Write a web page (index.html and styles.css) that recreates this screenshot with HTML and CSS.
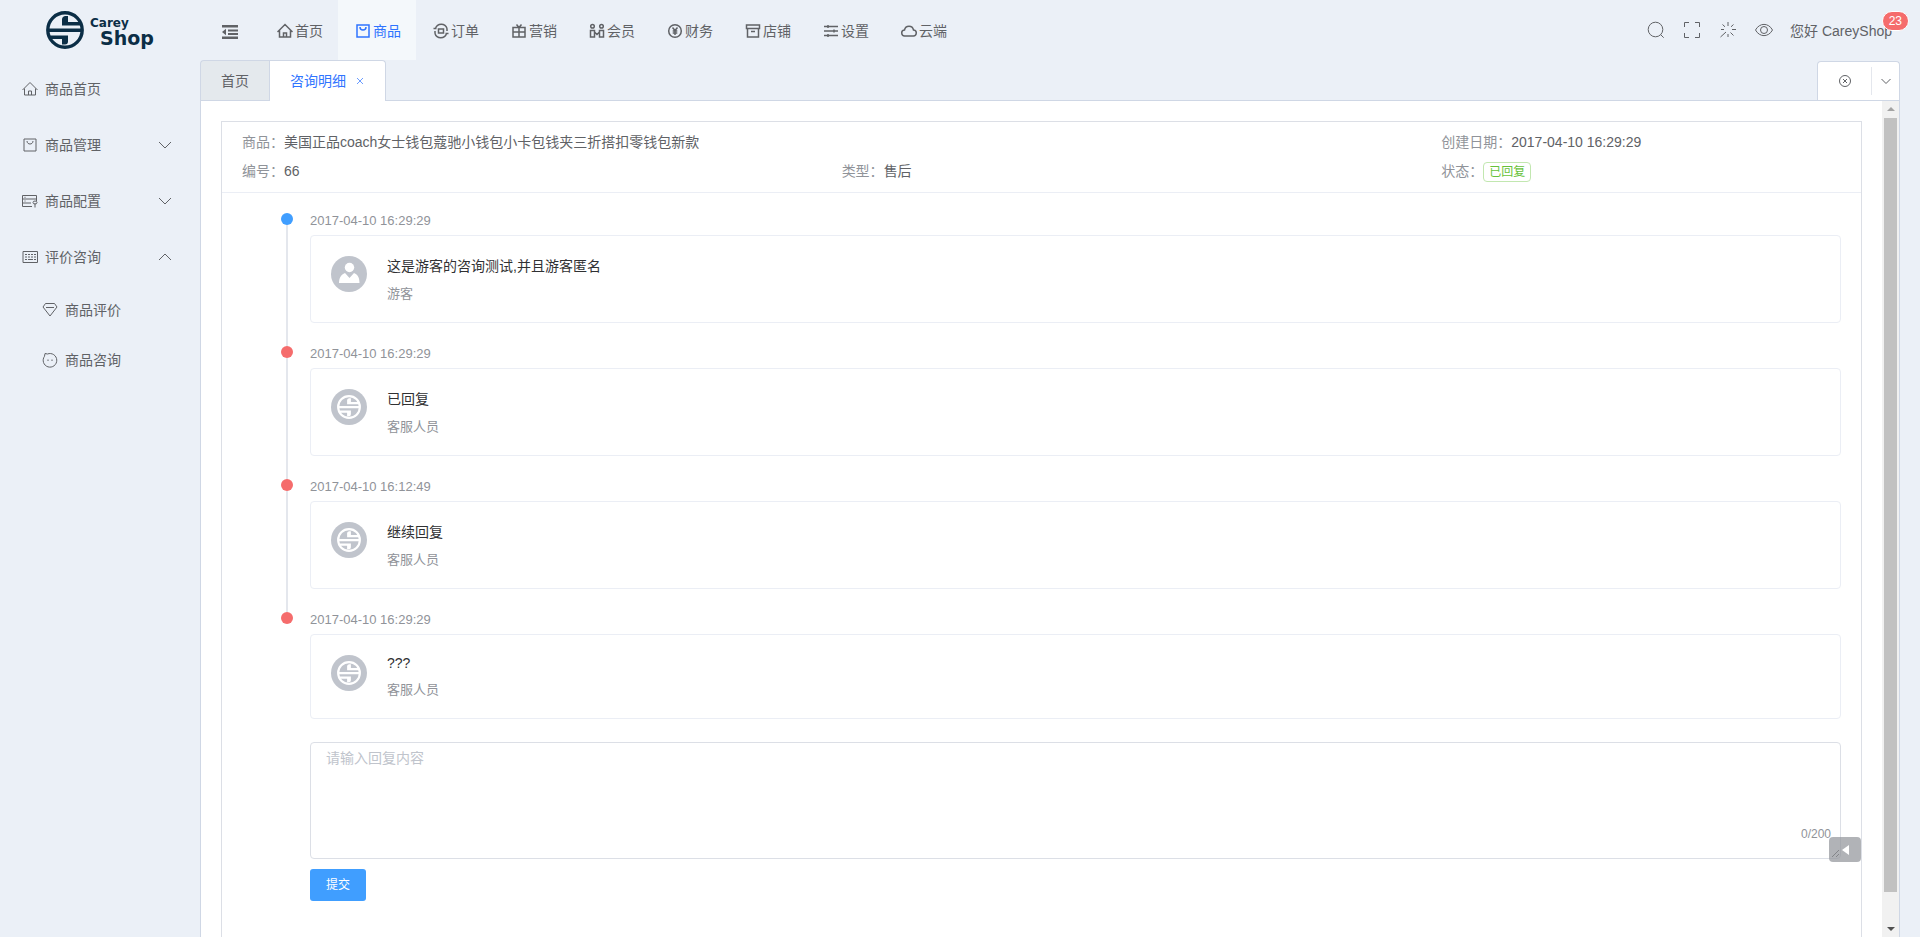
FILE: index.html
```html
<!DOCTYPE html>
<html lang="zh-CN">
<head>
  <meta charset="UTF-8" />
  <meta name="viewport" content="width=device-width, initial-scale=1.0"/>
  <title>咨询明细 - CareyShop</title>
  <link rel="stylesheet" href="styles.css">
</head>
<body>

<svg class="sprite" aria-hidden="true">
  <symbol id="logo" viewBox="0 0 38 38">
    <circle cx="19" cy="19" r="17.2" fill="none" stroke="currentColor" stroke-width="3.4"/>
    <path fill="currentColor" d="M3 17.500h32v3.500H3zM22 5v6h13v3.500H16V8.500q0-3 3-3.500zM3 24.500h19v6q0 3-3 3H16v-5.500H3z"/>
  </symbol>
  <symbol id="home" viewBox="0 0 16 16">
    <path d="M.500 9 8 1.500 15.500 9M2.500 7.500V14h11V7.500M6.500 14v-4h3v4"/>
  </symbol>
  <symbol id="bag" viewBox="0 0 16 16">
    <path d="M2 2h12v12H2zM5 4c0 4 6 4 6 0"/>
  </symbol>
  <symbol id="down" viewBox="0 0 14 14"><path d="m1 4 6 6 6-6"/></symbol>
  <symbol id="close" viewBox="0 0 14 14"><path d="m4 4 6 6M10 4l-6 6"/></symbol>
</svg>

<header class="header">
  <a class="brand" href="#" aria-label="CareyShop">
    <svg class="brand-logo"><use href="#logo"/></svg>
    <span class="brand-text">
      <span class="brand-carey">Carey</span>
      <span class="brand-shop">Shop</span>
    </span>
  </a>

  <button class="toggle" type="button" aria-label="折叠菜单">
    <svg viewBox="0 0 18 16"><path fill="currentColor" d="M1 1h16v2.500H1zM7 5.500h10v2H7zM7 9h10v2H7zM1 12.500h16V15H1zM1 8l4-3.200v6.400z"/></svg>
  </button>

  <nav class="nav">
    <a href="#"><svg class="icon bold"><use href="#home"/></svg>首页</a>
    <a href="#" class="active"><svg class="icon bold"><use href="#bag"/></svg>商品</a>
    <a href="#"><svg class="icon bold" viewBox="0 0 16 16"><path d="M2.500 5.500a6 6 0 0 1 11.500 0M13.500 10.500a6 6 0 0 1-11.500 0M.500 5.500h3M12.500 10.500h3M14 5.500V8M2 10.500V8M5.500 6h5v4h-5z"/></svg>订单</a>
    <a href="#"><svg class="icon bold" viewBox="0 0 16 16"><path d="M2 4.500h12V14H2zM8 4.500V14M2 9h12M5.500 1.500 8 4.500l2.500-3"/></svg>营销</a>
    <a href="#"><svg class="icon bold" viewBox="0 0 16 16"><circle cx="3.500" cy="3.300" r="1.800"/><circle cx="12.500" cy="3.300" r="1.800"/><path d="M1.500 14V7.500h4V14zM10.500 14V7.500h4V14zM5.500 9 8 11.500 10.500 9"/></svg>会员</a>
    <a href="#"><svg class="icon bold" viewBox="0 0 16 16"><circle cx="8" cy="8" r="6.300"/><path d="m5.500 4.500 2.500 3 2.500-3M8 7.500V12M5.700 8h4.600M5.700 10h4.600"/></svg>财务</a>
    <a href="#"><svg class="icon bold" viewBox="0 0 16 16"><path d="M1.500 2h13v3.500h-13zM2.500 5.500V14h11V5.500M6 8.500h4"/></svg>店铺</a>
    <a href="#"><svg class="icon bold" viewBox="0 0 16 16"><path d="M1 3.500h14M1 8h14M1 12.500h14M5 2v3M11 6.500v3M5 11v3"/></svg>设置</a>
    <a href="#"><svg class="icon bold" viewBox="0 0 16 16"><path d="M4 13a3 3 0 0 1-.5-6 4.600 4.600 0 0 1 9 0A3 3 0 0 1 12 13z"/></svg>云端</a>
  </nav>

  <div class="tools">
    <button type="button" aria-label="搜索"><svg viewBox="0 0 18 18"><circle cx="8.500" cy="8.500" r="7.300"/><path d="m13.700 13.700 3 3"/></svg></button>
    <button type="button" aria-label="全屏"><svg viewBox="0 0 18 18"><path d="M1.500 6V1.500H6M12 1.500h4.500V6M16.500 12v4.500H12M6 16.500H1.500V12"/></svg></button>
    <button type="button" aria-label="清除缓存"><svg viewBox="0 0 18 18"><path d="M9 1v4M9 13v3M13 8.500h4M2 8.500h3M3.500 3.500l2.500 2.300M14.500 3.500 12 5.800M14.500 14.500 11.500 11.500M1.500 16l5.500-5"/></svg></button>
    <button type="button" aria-label="主题"><svg viewBox="0 0 18 18"><path d="M.5 9C4.500 1.500 13.500 1.500 17.500 9 13.500 16.500 4.500 16.500.5 9z"/><circle cx="9" cy="9" r="3.500"/></svg></button>
    <a class="user" href="#">您好 CareyShop<span class="badge">23</span></a>
  </div>
</header>

<div class="layout">
  <aside class="sidebar">
    <a href="#"><svg class="icon"><use href="#home"/></svg>商品首页</a>
    <a href="#"><svg class="icon"><use href="#bag"/></svg>商品管理<svg class="arrow"><use href="#down"/></svg></a>
    <a href="#"><svg class="icon" viewBox="0 0 16 16"><path d="M10 13.500H.5v-11h14V8M.5 6h14M.5 10H9M2.500 4.300h1M2.500 8h1M13 10.500v4M11 9.500a2 1.500 0 0 0 4 0 2 1.500 0 0 0-4 0"/></svg>商品配置<svg class="arrow"><use href="#down"/></svg></a>
    <a href="#"><svg class="icon" viewBox="0 0 16 16"><path d="M1 2.500h14.500v11H1zM3 5.500h2M6 5.500h2M9 5.500h2M12 5.500h2M3 8h2M6 8h2M9 8h2M12 8h2M3 10.500h2M6 10.500h5M12 10.500h2"/></svg>评价咨询<svg class="arrow up"><use href="#down"/></svg></a>
    <a href="#" class="sub"><svg class="icon" viewBox="0 0 16 16"><path d="M3.500 1.500h9L15 5l-7 9L1 5zM4 5.500h8"/></svg>商品评价</a>
    <a href="#" class="sub"><svg class="icon" viewBox="0 0 16 16"><path d="M3 1.500 5.500 2a6.800 6.800 0 1 1-3 2.300zM6 7.500v1.500M10 7.500v1.500"/></svg>商品咨询</a>
  </aside>

  <main class="main">
    <div class="tabs">
      <a class="tab" href="#">首页</a>
      <div class="tab active"><a href="#">咨询明细</a><button type="button" aria-label="关闭"><svg><use href="#close"/></svg></button></div>
      <div class="tab-control">
        <button class="close-all" type="button" aria-label="关闭标签"><svg viewBox="0 0 14 14"><circle cx="7" cy="7" r="5.500"/><path d="m5 5 4 4M9 5 5 9"/></svg></button>
        <button class="more" type="button" aria-label="更多"><svg viewBox="0 0 14 14"><path d="m2.500 5 4.500 4.500L11.500 5"/></svg></button>
      </div>
    </div>

    <div class="page">
      <div class="content">
        <section class="card">
          <dl class="info">
            <div><dt>商品：</dt><dd>美国正品coach女士钱包蔻驰小钱包小卡包钱夹三折搭扣零钱包新款</dd></div>
            <div class="created"><dt>创建日期：</dt><dd>2017-04-10 16:29:29</dd></div>
            <div><dt>编号：</dt><dd>66</dd></div>
            <div><dt>类型：</dt><dd>售后</dd></div>
            <div><dt>状态：</dt><dd><span class="tag">已回复</span></dd></div>
          </dl>

          <div class="detail">
            <ul class="timeline">
              <li class="ask">
                <time>2017-04-10 16:29:29</time>
                <div class="message">
                  <svg class="avatar" viewBox="0 0 36 36"><circle cx="18" cy="18" r="18" fill="#c0c4cc"/><circle cx="18.500" cy="11.500" r="4.700" fill="#fff"/><path fill="#fff" d="M8 27c0-5 2-8.500 6-10l4.500 5 4.500-5c4 1.500 5.500 5 5.500 10z"/></svg>
                  <div><p>这是游客的咨询测试,并且游客匿名</p><small>游客</small></div>
                </div>
              </li>
              <li>
                <time>2017-04-10 16:29:29</time>
                <div class="message">
                  <span class="avatar service"><svg><use href="#logo"/></svg></span>
                  <div><p>已回复</p><small>客服人员</small></div>
                </div>
              </li>
              <li>
                <time>2017-04-10 16:12:49</time>
                <div class="message">
                  <span class="avatar service"><svg><use href="#logo"/></svg></span>
                  <div><p>继续回复</p><small>客服人员</small></div>
                </div>
              </li>
              <li>
                <time>2017-04-10 16:29:29</time>
                <div class="message">
                  <span class="avatar service"><svg><use href="#logo"/></svg></span>
                  <div><p class="latin">???</p><small>客服人员</small></div>
                </div>
              </li>
            </ul>

            <form class="reply">
              <div class="reply-box">
                <textarea id="reply" maxlength="200" placeholder="请输入回复内容" aria-label="回复内容"></textarea>
                <span class="count">0/200</span>
              </div>
              <button type="button">提交</button>
            </form>
          </div>
        </section>
      </div>

      <div class="scrollbar" aria-hidden="true">
        <i class="scroll-up"></i>
        <i class="thumb"></i>
        <i class="scroll-down"></i>
      </div>

      <button class="drawer" type="button" aria-label="展开"></button>
    </div>
  </main>
</div>

</body>
</html>
```

FILE: styles.css
```css
* {
  box-sizing: border-box;
}

body {
  margin: 0;
  height: 100vh;
  display: flex;
  flex-direction: column;
  overflow: hidden;
  background: #ebf0f7;
  color: #606266;
  font-family: "Liberation Sans", "Noto Sans CJK SC", sans-serif;
  font-size: 14px;
  line-height: 20px;
}

a {
  color: inherit;
  text-decoration: none;
}

button {
  padding: 0;
  border: 0;
  background: none;
  color: inherit;
  font: inherit;
  cursor: pointer;
}

svg {
  fill: none;
  stroke: currentColor;
  stroke-width: 1;
}

.sprite {
  display: none;
}

.icon {
  width: 16px;
  height: 16px;
  flex: none;
}

.bold {
  stroke-width: 1.5;
}

/* header */
.header {
  display: flex;
  height: 60px;
  flex: none;
}

.brand {
  display: flex;
  align-items: center;
  width: 200px;
  gap: 6px;
  padding-left: 46px;
  color: #0b2e46;
}

.brand-logo {
  width: 38px;
  height: 38px;
  stroke: none;
}

.brand-text {
  display: flex;
  flex-direction: column;
  padding-top: 4px;
  font-family: "DejaVu Sans", sans-serif;
  font-weight: bold;
}

.brand-carey {
  font-size: 12px;
  line-height: 12px;
}

.brand-shop {
  padding-left: 10px;
  font-size: 19px;
  line-height: 18px;
}

.toggle {
  display: flex;
  align-items: center;
  justify-content: center;
  width: 60px;
  padding-top: 4px;
}

.toggle svg {
  width: 18px;
  height: 16px;
  stroke: none;
}

.nav {
  display: flex;
}

.nav a {
  display: flex;
  align-items: center;
  gap: 2px;
  padding: 2px 15px 0 17px;
}

.nav .active {
  background: #f4f8fb;
  color: #2f74ff;
}

.tools {
  display: flex;
  align-items: center;
  margin-left: auto;
  padding-right: 28px;
}

.tools button {
  display: flex;
  justify-content: center;
  width: 36px;
}

.tools svg {
  width: 18px;
  height: 18px;
}

.user {
  position: relative;
  padding: 2px 0 0 8px;
}

.badge {
  position: absolute;
  top: -8px;
  right: -17px;
  padding: 0 6px;
  border: 1px solid #fff;
  border-radius: 10px;
  background: #f56c6c;
  color: #fff;
  font-size: 12px;
  line-height: 18px;
}

/* side menu */
.layout {
  display: flex;
  flex: 1;
  min-height: 0;
}

.sidebar {
  width: 200px;
  flex: none;
}

.sidebar a {
  display: flex;
  align-items: center;
  gap: 7px;
  height: 56px;
  padding: 2px 28px 0 22px;
}

.sidebar .sub {
  height: 50px;
  padding-left: 42px;
}

.arrow {
  width: 14px;
  height: 14px;
  margin-left: auto;
}

.up {
  transform: rotate(180deg);
}

/* tabs */
.main {
  display: flex;
  flex: 1;
  flex-direction: column;
  min-width: 0;
  margin-right: 20px;
}

.tabs {
  display: flex;
  height: 41px;
  flex: none;
  border-bottom: 1px solid #cfd7e5;
}

.tab {
  display: flex;
  align-items: center;
  padding: 0 20px;
  border: 1px solid #cfd7e5;
  border-width: 1px 0 0 1px;
  border-top-left-radius: 4px;
  background: #e4e9ed;
}

.tab.active {
  gap: 7px;
  margin-bottom: -1px;
  padding-right: 18px;
  border-right-width: 1px;
  border-radius: 0 4px 0 0;
  background: #fff;
  color: #2f74ff;
}

.tab button,
.tab svg {
  display: block;
  width: 14px;
  height: 14px;
}

.tab button {
  opacity: 0.7;
}

.tab-control {
  display: flex;
  align-items: center;
  margin: 1px 0 0 auto;
  border: 1px solid #cfd7e5;
  border-bottom: 0;
  border-radius: 4px 4px 0 0;
  background: #fff;
}

.tab-control button {
  display: flex;
  align-items: center;
  justify-content: center;
  height: 28px;
}

.tab-control svg {
  width: 14px;
  height: 14px;
}

.close-all {
  width: 53px;
}

.tab-control .more {
  width: 28px;
  border-left: 1px solid #e4e7ed;
}

/* page */
.page {
  position: relative;
  display: flex;
  flex: 1;
  min-height: 0;
  border: 1px solid #cfd7e5;
  border-width: 0 1px;
  background: #fff;
}

.content {
  display: flex;
  flex: 1;
  min-width: 0;
  padding: 20px 20px 0;
  overflow: hidden;
}

.card {
  flex: 1;
  min-width: 0;
  border: 1px solid #dcdfe6;
  border-bottom: 0;
}

.info {
  display: grid;
  grid-template-columns: 9fr 9fr 6fr;
  margin: 0;
  padding: 6px 20px;
  border-bottom: 1px solid #ebeef5;
  line-height: 29px;
}

.info div {
  display: flex;
}

.info .created {
  grid-column: 3;
}

.info dt {
  color: #909399;
}

.info dd {
  display: flex;
  align-items: center;
  margin: 0;
}

.tag {
  padding: 0 5px;
  border: 1px solid #c2e7b0;
  border-radius: 4px;
  color: #67c23a;
  font-size: 12px;
  line-height: 18px;
}

.detail {
  padding: 20px 20px 0 59px;
}

/* consult records */
.timeline {
  margin: 0;
  padding: 0;
  list-style: none;
}

.timeline li {
  position: relative;
  padding: 0 0 23px 29px;
}

.timeline li::before {
  content: "";
  position: absolute;
  top: 0;
  left: 0;
  z-index: 1;
  width: 12px;
  height: 12px;
  border-radius: 50%;
  background: #f56c6c;
}

.timeline .ask::before {
  background: #409eff;
}

.timeline li:not(:last-child)::after {
  content: "";
  position: absolute;
  top: 6px;
  left: 5px;
  width: 2px;
  height: 100%;
  background: #e4e7ed;
}

.timeline time {
  display: block;
  margin-bottom: 6px;
  color: #909399;
  font-size: 13px;
  line-height: 16px;
}

.message {
  display: flex;
  gap: 20px;
  padding: 20px 20px 19px;
  border: 1px solid #ebeef5;
  border-radius: 4px;
}

.avatar {
  width: 36px;
  height: 36px;
  flex: none;
  stroke: none;
}

.service {
  display: flex;
  align-items: center;
  justify-content: center;
  border-radius: 50%;
  background: #c0c4cc;
  color: #fff;
}

.service svg {
  width: 24px;
  height: 24px;
  stroke: none;
}

.message p {
  margin: 0 0 9px;
  color: #303133;
}

.message .latin {
  line-height: 17px;
}

.message small {
  display: block;
  color: #909399;
  font-size: 13px;
  line-height: 18px;
}

.reply {
  padding-left: 29px;
}

.reply-box {
  position: relative;
  display: flex;
  margin-bottom: 10px;
}

.reply textarea {
  width: 100%;
  height: 117px;
  padding: 5px 15px;
  border: 1px solid #dcdfe6;
  border-radius: 4px;
  color: #606266;
  font: inherit;
  resize: vertical;
}

.reply textarea::placeholder {
  color: #c0c4cc;
}

.count {
  position: absolute;
  right: 10px;
  bottom: 15px;
  color: #909399;
  font-size: 12px;
}

.reply button {
  padding: 0 16px;
  border-radius: 3px;
  background: #409eff;
  color: #fff;
  font-size: 12px;
  line-height: 32px;
}

.scrollbar {
  display: flex;
  flex-direction: column;
  align-items: center;
  width: 17px;
  padding: 6px 0;
  background: #f1f1f1;
}

.scroll-up,
.scroll-down {
  border: 4px solid transparent;
}

.scroll-up {
  border-top-width: 0;
  border-bottom-color: #a3a3a3;
  margin-bottom: 7px;
}

.scroll-down {
  border-bottom-width: 0;
  border-top-color: #505050;
}

.thumb {
  width: 13px;
  flex: 1;
  margin-bottom: 35px;
  background: #c1c1c1;
}

.drawer {
  position: absolute;
  right: 38px;
  bottom: 75px;
  display: flex;
  align-items: center;
  justify-content: center;
  width: 32px;
  height: 25px;
  border-radius: 4px;
  background: rgba(144, 147, 153, 0.7);
}

.drawer::before {
  content: "";
  border: 5px solid transparent;
  border-right: 7px solid #fff;
  border-left: 0;
}
```
